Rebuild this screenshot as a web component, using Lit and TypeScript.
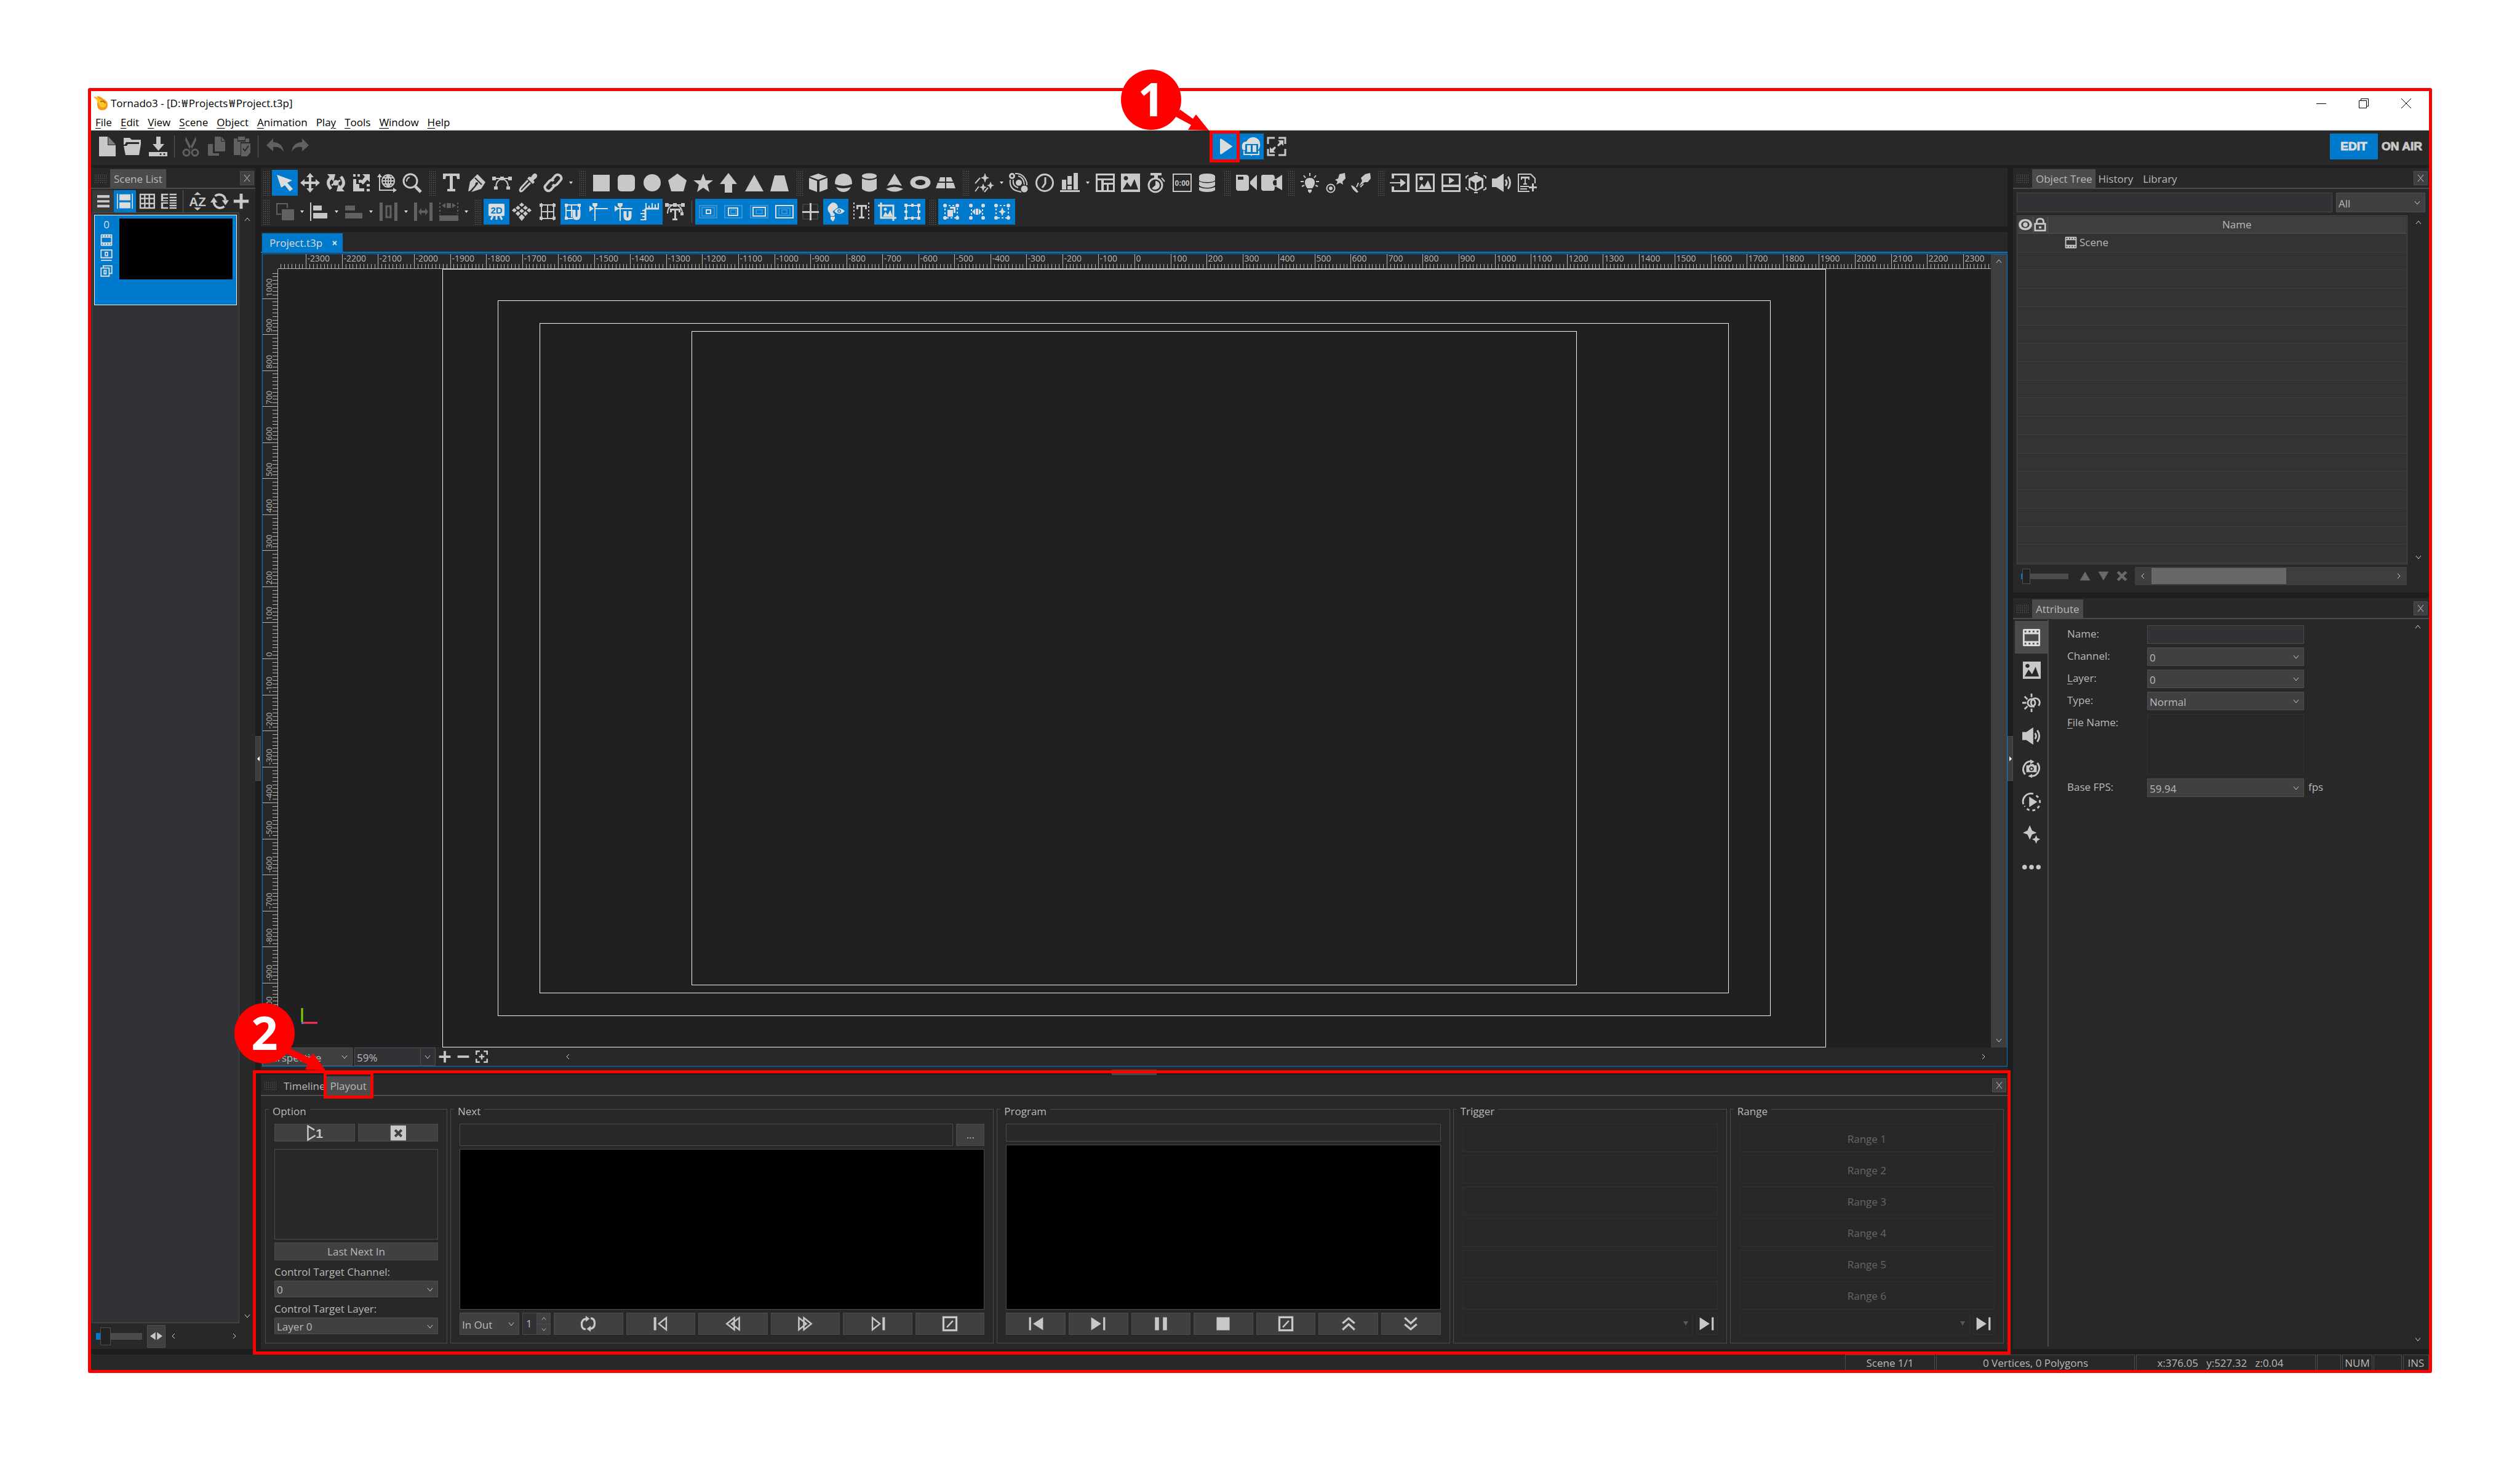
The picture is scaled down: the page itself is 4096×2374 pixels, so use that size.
import { LitElement, html, svg, css, TemplateResult, SVGTemplateResult } from 'lit';
import { customElement, state } from 'lit/decorators.js';
import { classMap } from 'lit/directives/class-map.js';

type Glyph = SVGTemplateResult;

/* Every glyph is drawn in a 32 x 32 box. "l" = stroked line, "h" = hole in the background colour. */
const glyphs: Record<string, Glyph> = {
  newFile: svg`<path d="M3 0h14v14h13v18H3z"/><path opacity=".55" d="M18 0l12 13H18z"/>`,
  openFile: svg`<path d="M2 2h10l3 3h15v7h-3V9H6L4 13H2z"/><path d="M9 12h21l-3 18H5L2 15h5z"/>`,
  saveFile: svg`<path d="M13 0h7v12h6L16.500 23 7 12h6z"/><path d="M1 25h30v7H1z"/><circle class="h" cx="20" cy="28.500" r="1.500"/><circle class="h" cx="26" cy="28.500" r="1.500"/>`,
  cut: svg`<path d="M8 0l10 20-3 2L7 6zM24 0L14 20l3 2 8-16z"/><circle class="l" cx="9" cy="26" r="5"/><circle class="l" cx="23" cy="26" r="5"/>`,
  copy: svg`<path d="M13 0h10v8h7v16H13z"/><path d="M24 0l6 7h-6z"/><path d="M2 12h8v15h10v4H2z"/>`,
  paste: svg`<path d="M3 3h6v5h13V3h6v6H14v21H3z"/><path d="M10 0h11v6H10z"/><path d="M15 11h15v15l-5 6H15z"/><path class="lh" stroke-width="2" d="M18 19l3 4 6-8"/>`,
  undo: svg`<path d="M2 14L13 3v6c9 0 16 5 17 16-4-7-9-9-17-8v7z"/>`,
  redo: svg`<path d="M30 14L19 3v6C10 9 3 14 2 25c4-7 9-9 17-8v7z"/>`,
  play: svg`<path d="M7 5q0-3 3-1l16 11q2 1 0 2L10 28q-3 2-3-1z"/>`,
  cloud: svg`<path d="M1 20q-2-12 7-12Q12 0 21 1q11 3 9 15l-2 5h-3v-8H8v9H3z"/><path class="lh" stroke-width="2" d="M7 13h19v14H7z"/><path d="M9 14h6v11H9zM18 14h6v11h-6z"/><path class="l" stroke-width="2" d="M4 23v6h24v-6"/><path d="M14 28h4l-2 4z"/>`,
  expand: svg`<path class="l" d="M2 12V2h11M19 2h11v10M30 20v10H19M13 30H2V20"/><path d="M18 6h9v9l-3-3-5 4-2-2 4-5zM14 26H5v-9l3 3 5-4 2 2-4 5z"/>`,
  select: svg`<path d="M3 3L28 12 20 16 29 26 24 30 16 20 10 24Z"/>`,
  move: svg`<path d="M16 0l6 7h-4v7h7v-4l7 6-7 6v-4h-7v7h4l-6 7-6-7h4v-7H7v4L0 16l7-6v4h7V7h-4z"/>`,
  rotate: svg`<path class="l" stroke-width="5" d="M8 8Q-1 15 8 26M24 24Q33 17 24 6"/><path d="M2 2h13l-3 12zM30 30H17l3-12z"/><circle cx="16" cy="16" r="4.500"/><path class="l" d="M9 20l14-8"/>`,
  scale: svg`<path d="M3 2h4v4H3zM10 2h4v4h-4zM3 10h5v8h5v7h8v5H3zM12 11h5v5h-5z"/><path d="M18 2h12v13l-4-4-7 8-4-4 7-9z"/><path d="M25 18h5v4h-5zM25 26h5v4h-5z"/>`,
  axes: svg`<path class="l" stroke-width="2" d="M4 5v23h23M18 3v20M9 13h18M10 8h16M10 18h16M18 3q-9 10 0 20M18 3q9 10 0 20"/><path d="M0 7l4-6 4 6zM26 24l6 4-6 4z"/><circle class="l" stroke-width="2" cx="18" cy="13" r="10"/>`,
  zoom: svg`<circle class="l" stroke-width="3" cx="13" cy="13" r="11"/><path class="l" stroke-width="5" d="M21 22l9 9"/><path class="l" stroke-width="2" d="M7 14q0-6 5-7"/>`,
  text: svg`<path d="M3 1h27v9h-4l-1-5h-6v21h4v4H10v-4h4V5H8l-1 5H3z"/>`,
  pen: svg`<path d="M18 2L31 15 24 26 8 31 12 26 17 20 19 17 15 16 14 20 6 29 3 30 6 14Z"/><path class="lh" stroke-width="2" d="M14 8l11 11"/><circle class="h" cx="17" cy="17" r="2"/>`,
  curve: svg`<path class="l" stroke-width="2" d="M3 9h26M6 24Q6 12 16 9Q26 12 26 24"/><path d="M0 6h6v6H0zM13 6h6v6h-6zM26 6h6v6h-6zM3 22h6v5H3zM23 22h6v5h-6z"/>`,
  dropper: svg`<path d="M21 7q5-9 9-5 4 4-5 10l2 3-3 3L15 9l3-3z"/><path class="l" stroke-width="3" d="M16 12L5 24q-3 4-1 6 3 0 5-3L20 16"/>`,
  link: svg`<g class="l" stroke-width="4"><path d="M13 12l7-8q4-3 8 1 3 4 0 7l-6 7q-4 3-7 0"/><path d="M19 20l-7 8q-4 3-8-1-3-4 0-7l6-7q4-3 7 0"/></g>`,
  square: svg`<path d="M3 3h27v27H3z"/>`,
  round: svg`<rect x="2" y="3" width="28" height="27" rx="6"/>`,
  circle: svg`<circle cx="16" cy="16" r="14"/>`,
  pentagon: svg`<path d="M16 1L31 12 26 30H6L1 12z"/>`,
  star: svg`<path d="M16 1l4 11h12l-9 7 3 12-10-7-10 7 3-12-9-7h12z"/>`,
  arrowUp: svg`<path d="M16 0l14 18h-8v14H10V18H2z"/>`,
  triangle: svg`<path d="M16 3l15 27H1z"/>`,
  trapezoid: svg`<path d="M8 4h16l7 26H1z"/>`,
  cube: svg`<path d="M16 1l14 5-14 5L2 6zM1 8l13 5v18L1 26zM31 8l-13 5v18l13-5z"/>`,
  sphere: svg`<path d="M2 18Q2 2 16 1Q30 2 30 18Q16 24 2 18zM4 23Q16 27 28 23Q24 31 16 31Q8 31 4 23z"/>`,
  cylinder: svg`<ellipse cx="16" cy="5" rx="12" ry="4.500"/><path d="M4 9q12 6 24 0v17q-12 9-24 0z"/>`,
  cone: svg`<path d="M16 1l12 20q-12-4-24 0z"/><path d="M2 26q14-7 28 0-14 9-28 0z"/>`,
  torus: svg`<path fill-rule="evenodd" d="M16 5c22 0 22 21 0 21S-6 5 16 5zm0 6c-11 0-11 9 0 9s11-9 0-9z"/>`,
  plane: svg`<path d="M7 7h8v7H5zM17 7h8l3 7H17zM3 16h12v9H0zM17 16h12l3 9H17z"/>`,
  particles: svg`<path d="M17 0l2 6 5 2-5 2-2 6-2-6-5-2 5-2zM14 17l2 5 4 1-4 2-2 5-2-5-4-2 4-1zM26 14l2 5 4 1-4 2-2 5-2-5-4-2 4-1z"/><path class="l" stroke-width="2" d="M1 17l8-9M1 30l6-8M16 31l6-7"/>`,
  orbit: svg`<circle class="l" stroke-width="3" cx="5" cy="5" r="3.500"/><path class="l" stroke-width="2" d="M10 1q14-1 19 15v4M2 11q-2 16 14 19l4 1M15 5q9 2 10 14M7 11q-2 10 8 13"/><circle cx="16" cy="16" r="5"/><circle cx="25" cy="26" r="5.500"/>`,
  clock: svg`<circle class="l" stroke-width="3" cx="16" cy="16" r="13.500"/><path class="l" stroke-width="3" d="M17 7v10l-5 7"/>`,
  chart: svg`<path d="M0 28h32v3H0zM3 11h7v16H3zM12 5h7v14h-7zM12 21h7v6h-7zM22 0h7v27h-7z"/>`,
  table: svg`<path fill-rule="evenodd" d="M1 1h31v30H1zM4 4v5h25V4zM4 12v16h6V12zM14 12v4h15v-4zM14 19v9h5v-9zM22 19v9h7v-9z"/>`,
  image: svg`<path fill-rule="evenodd" d="M1 1h31v30H1zM4 27h25L23 10 17 23 11 15zM9 5a3.500 3.500 0 1 0 .1 0z"/>`,
  stopwatch: svg`<path d="M7 0h18v4h-6v4h-6V4H7z"/><circle class="l" stroke-width="3" cx="15" cy="20" r="11"/><path class="l" stroke-width="2" d="M25 8l5 6"/><path d="M15 13v7l-6 5q3 3 6 2a7 7 0 0 0 0-14z"/>`,
  counter: svg`<path class="l" stroke-width="2" d="M2 2h29v28H2z"/><text x="16.500" y="21" text-anchor="middle" class="digits">0:00</text>`,
  database: svg`<path d="M3 5q2-4 13-4t13 4v7q-2 3-13 3T3 12zM3 14q13 5 26 0v6q-4 4-13 4T3 20zM3 23q13 5 26 0v5q-4 3-13 3T3 28z"/>`,
  camera: svg`<path fill-rule="evenodd" d="M0 3h17q4 1 4 5v18q-1 3-4 3H3q-3-1-3-4zM3 6v5h9V6z"/><path d="M23 14L34 3v25L23 18z"/>`,
  camera2: svg`<path d="M0 6q0-3 3-3h16q3 1 3 6-6 7 0 14 0 6-3 6H3q-3-1-3-4z"/><path d="M25 9l9-6v25l-9-5z"/><circle class="l" stroke-width="2" cx="23" cy="16" r="5.500"/>`,
  bulb: svg`<path d="M16 8q8 0 8 8 0 4-4 9h-8q-4-5-4-9 0-8 8-8zM13 27h6v3l-3 3-3-3z"/><path class="l" stroke-width="2" d="M16 0v5M6 4l3 4M26 4l-3 4M1 14h5M26 14h5M3 22l4-2M29 22l-4-2"/>`,
  spot: svg`<path d="M22 2l9-2 1 9-5 5 1 5-5-3-6 3 2-5-4-3 5-2z"/><circle class="l" stroke-width="2" cx="8" cy="25" r="6.500"/><circle cx="8" cy="25" r="3"/>`,
  spot2: svg`<path d="M23 2l8-2 1 9-5 6h-5l-9 6 5-8-2-5z"/><path class="l" stroke-width="2" d="M12 16l-3 7M20 18l-5 5"/><path d="M0 20q5 0 12 11l-3 1Q1 26 0 20z"/>`,
  importIn: svg`<path d="M3 1h29v30H3v-9h4v6h21V4H7v5H3z"/><path d="M0 15h17V9l9 7-9 7v-6H0z"/>`,
  imageFrame: svg`<path fill-rule="evenodd" d="M1 1h31v30H1zM4 4v24h25V4z"/><path d="M6 26l5-9 4 6 6-11 6 14z"/><circle cx="10" cy="9" r="3"/>`,
  playFrame: svg`<path fill-rule="evenodd" d="M1 1h31v30H1zM4 4v15h25V4zM4 23v5h25v-5z"/><path d="M13 6l9 6-9 6z"/>`,
  cubeScan: svg`<path fill-rule="evenodd" d="M16 3l12 6v15l-12 6-12-6V9zM7 12v10l7 5V16zM25 12l-8 4v11l8-5z"/><path class="l" stroke-width="2" d="M0 9V6l4-2M32 9V6l-4-2M0 23v3l4 2M32 23v3l-4 2M13 0h6M13 32h6"/>`,
  speaker: svg`<path d="M0 9h7L19 1v30L7 23H0z"/><path class="l" stroke-width="3" d="M22 11q4 5 0 10M26 6q7 10 0 20"/>`,
  textDoc: svg`<path class="l" stroke-width="2" d="M20 30H2V2h20l7 7v8"/><path d="M6 6h14v5h-2V9h-4v8h2v2h-6v-2h2V9H8v2H6zM5 21h14v2H5zM5 25h11v2H5zM24 17h3v5h5v3h-5v5h-3v-5h-5v-3h5z"/>`,
  bringFront: svg`<path class="l" stroke-width="2" d="M10 20H3V3h17v7"/><path d="M11 12h20v18H11z"/>`,
  alignLeft: svg`<path d="M1 1h2v30H1zM6 6h14v8H6zM6 18h23v9H6z"/>`,
  alignLeft2: svg`<path d="M2 6h16v8H2zM2 18h28v9H2z"/>`,
  distribute: svg`<path d="M1 1h5v30H1zM25 1h5v30h-5z"/><path class="l" stroke-width="3" d="M12 7h7v18h-7z"/>`,
  spacing: svg`<path d="M1 1h5v30H1zM26 1h5v30h-5z"/><path d="M8 16l5-6v4h6v-4l5 6-5 6v-4h-6v4z"/>`,
  sameSize: svg`<path d="M1 22h31v9H1zM5 6l6-4v8zM28 6l-6-4v8zM13 2h7v8h-7z"/><path class="l" stroke-width="2" stroke-dasharray="3 3" d="M2 1v19M31 1v19"/>`,
  twoD: svg`<rect x="3" y="3" width="26" height="20" rx="2"/><path class="l" d="M10 23l-3 6M16 23v6M22 23l3 6"/><text x="16" y="19" text-anchor="middle" class="two">2D</text>`,
  rhombGrid: svg`<path d="M16 1l4 4-4 3-4-3zM10 6l4 4-4 3-4-3zM22 6l4 4-4 3-4-3zM16 11l4 4-4 3-4-3zM4 10l4 4-4 3-4-3zM28 10l4 4-4 3-4-3zM10 15l4 4-4 4-4-4zM22 15l4 4-4 4-4-4zM16 20l5 5-5 6-5-6z"/>`,
  gridBox: svg`<path class="l" stroke-width="2" d="M6 2v28M26 2v28M4 5h24M4 27h24M16 5v22M5 16h22"/><path d="M3 3h5v5H3zM24 3h5v5h-5zM3 24h5v5H3zM24 24h5v5h-5z"/>`,
  gridMagnet: svg`<path class="l" stroke-width="2" d="M5 4v24M3 5h26M4 14h12M4 27h12M14 5v20M27 5v8"/><path d="M3 3h5v5H3zM24 3h5v5h-5zM3 24h5v5H3z"/><path class="l" stroke-width="5" d="M18 13v9q0 5 4 5t4-5v-9"/>`,
  guide: svg`<path class="l" stroke-width="2" d="M9 11h22M10 5v26"/><path d="M6 2h8v4l-4 4-4-4zM1 6l7 5-7 5z"/>`,
  guideMagnet: svg`<path class="l" stroke-width="2" d="M4 11h26M10 5v26"/><path d="M6 2h8v4l-4 4-4-4zM1 6l7 5-7 5z"/><path class="l" stroke-width="5" d="M18 15v8q0 5 4 5t4-5v-8"/>`,
  rulers: svg`<path class="l" stroke-width="3" d="M9 11h22M9 11v19"/><path class="l" stroke-width="2" d="M10 11V2M15 11V6M20 11V2M25 11V4M30 11V2M9 29H1M9 24H4M9 19H1M9 14H4"/>`,
  textCurve: svg`<path class="l" stroke-width="2" d="M3 5h26M4 19Q4 7 14 5M28 19Q28 9 20 6"/><path d="M0 2h6v6H0zM13 2h6v6h-6zM26 2h6v6h-6zM8 11h17v6h-3v-3h-4v13h2v3h-8v-3h3V14h-4v3H8zM25 17h5v5h-5z"/>`,
  safe1: svg`<g class="l" stroke-width="2"><path opacity=".25" d="M2 6h28v20H2zM6 9h20v14H6z"/><path d="M13 13h7v6h-7z"/></g>`,
  safe2: svg`<g class="l" stroke-width="2"><path opacity=".25" d="M2 6h28v20H2zM12 13h8v6h-8z"/><path d="M8 10h15v12H8z"/></g>`,
  safe3: svg`<g class="l" stroke-width="2"><path opacity=".25" d="M2 6h28v20H2zM11 13h10v6H11z"/><path d="M6 9h20v14H6z"/></g>`,
  safe4: svg`<g class="l" stroke-width="2"><path opacity=".25" d="M7 10h18v12H7zM12 13h8v6h-8z"/><path d="M2 6h28v20H2z"/></g>`,
  crosshair: svg`<path class="l" opacity=".3" stroke-width="1" d="M4 4h24v24H4z"/><path d="M15 2h3v13h12v3H18v12h-3V18H3v-3h12z"/>`,
  bulbEye: svg`<path d="M10 1q8 0 9 8l-8 6q-1 2 3 5l-1 3H7q0-4-4-8-3-8 7-14zM7 24h7v3l-3 5-4-4z"/><path fill-rule="evenodd" d="M13 15q8-9 17 0-9 9-17 0zM21 12a3 3 0 1 0 .1 0z"/><circle cx="21" cy="15" r="1.500"/>`,
  textBounds: svg`<path class="l" stroke-width="2" stroke-dasharray="3 3" d="M4 1v30M28 1v30"/><path d="M8 5h17v7h-3V8h-4v16h3v3h-9v-3h3V8h-4v4H8z"/>`,
  cropTool: svg`<path class="l" stroke-width="3" d="M1 6h25v25M6 1v25h25"/><path d="M9 24l4-8 4 5 4-8 4 11z"/><circle cx="13" cy="12" r="2.500"/>`,
  transform: svg`<path class="l" stroke-width="2" d="M6 6h20v20H6z"/><path d="M3 3h5v5H3zM24 3h5v5h-5zM3 24h5v5H3zM24 24h5v5h-5zM14 3h4v5h-4zM14 24h4v5h-4zM3 14h5v4H3zM24 14h5v4h-5z"/>`,
  marqueeCopy: svg`<path class="l" stroke-width="2" stroke-dasharray="3 3" d="M6 6h20v20H6z"/><path d="M10 13h9v11h-9zM14 8h9v10h-3v-7h-6z"/><circle cx="6" cy="6" r="3"/><circle cx="26" cy="6" r="3"/><circle cx="6" cy="26" r="3"/><circle cx="26" cy="26" r="3"/>`,
  marqueeMove: svg`<path class="l" stroke-width="2" stroke-dasharray="3 3" d="M7 6v20M25 6v20"/><path d="M8 16l5-5v10zM24 16l-5-5v10zM14 11h4v10h-4z"/><circle cx="6" cy="6" r="3"/><circle cx="26" cy="6" r="3"/><circle cx="6" cy="26" r="3"/><circle cx="26" cy="26" r="3"/>`,
  marqueeStar: svg`<path class="l" stroke-width="2" stroke-dasharray="3 3" d="M6 6h20v20H6z"/><path d="M16 9l2 5 4 2-4 2-2 5-2-5-4-2 4-2z"/><circle cx="6" cy="6" r="3"/><circle cx="26" cy="6" r="3"/><circle cx="6" cy="26" r="3"/><circle cx="26" cy="26" r="3"/>`,
  film: svg`<path fill-rule="evenodd" d="M3 1h26q2 0 2 2v26q0 2-2 2H3q-2 0-2-2V3q0-2 2-2zM4 10v12h24V10zM4 4v3h3V4zM11 4v3h3V4zM18 4v3h3V4zM25 4v3h3V4zM4 25v3h3v-3zM11 25v3h3v-3zM18 25v3h3v-3zM25 25v3h3v-3z"/>`,
  slot: svg`<path class="l" stroke-width="3" d="M2 2h28v20H2z"/><path class="l" d="M2 29h28M13 8h6v9h-6z"/>`,
  layers: svg`<path class="l" stroke-width="3" d="M2 9h21v21H2zM8 9V3h22v20h-7M10 15h5v9h-5z"/>`,
  listView: svg`<path d="M0 0h32v7H0zM0 13h32v6H0zM0 25h32v7H0z"/>`,
  cardView: svg`<path d="M0 1h2v30H0zM30 1h2v30h-2zM5 2h22v12H5zM5 18h22v12H5z"/>`,
  gridView: svg`<path fill-rule="evenodd" d="M1 1h31v30H1zM4 4v5h6V4zM13 4v5h6V4zM22 4v5h7V4zM4 12v7h6v-7zM13 12v7h6v-7zM22 12v7h7v-7zM4 22v6h6v-6zM13 22v6h6v-6zM22 22v6h7v-6z"/>`,
  detailView: svg`<path d="M1 1h14v3H5v4h10v3H5v3h10v2H1zM18 1h14v3H18zM18 7h14v3H18zM18 13h14v3H18zM1 18h14v3H5v7h10v3H1zM18 18h14v3H18zM18 23h14v3H18zM18 28h14v3H18z"/>`,
  sortAz: svg`<path d="M16 0l6 5H10zM16 32l6-5H10z"/><text x="16" y="24" text-anchor="middle" class="az">AZ</text>`,
  refresh: svg`<path class="l" stroke-width="4" d="M8 7a11 11 0 0 1 18 7M24 25a11 11 0 0 1-18-7"/><path d="M20 14h12l-6 9zM0 18h12l-6-9z"/>`,
  plus: svg`<path d="M13 1h6v12h12v6H19v12h-6V19H1v-6h12z"/>`,
  minus: svg`<path d="M1 13h30v6H1z"/>`,
  fit: svg`<path class="l" stroke-width="4" d="M2 11V2h9M21 2h9v9M30 21v9h-9M11 30H2v-9"/><path d="M14 9h4v5h5v4h-5v5h-4v-5H9v-4h5z"/>`,
  eye: svg`<path fill-rule="evenodd" d="M16 3c21 0 21 26 0 26S-5 3 16 3zm0 5c-13 0-13 16 0 16s13-16 0-16z"/><circle cx="16" cy="16" r="5.500"/>`,
  lock: svg`<path fill-rule="evenodd" d="M2 12h28v20H2zM6 16v12h20V16z"/><path class="l" stroke-width="4" d="M8 13V9q0-7 8-7t8 7v4"/><path d="M13 20h6v5h-6z"/>`,
  light: svg`<path class="l" stroke-width="3" d="M16 0v6M16 26v6M0 16h7M4 5l5 5M4 27l5-5"/><circle class="l" stroke-width="3" cx="16" cy="16" r="6.500"/><path class="l" stroke-width="3" d="M28 21a7.500 7.500 0 1 0-7 2"/>`,
  cameraLoop: svg`<path class="l" stroke-width="3" d="M5 26A14 14 0 0 1 16 3M26 6a14 14 0 0 1-9 23"/><path d="M14 0l7 4-7 4zM17 32l-7-3 7-4z"/><path fill-rule="evenodd" d="M7 10h5l2-2h5l2 2h4v12H7zM16 12a4 4 0 1 0 .1 0z"/><circle cx="16" cy="16" r="2"/>`,
  playDash: svg`<path class="l" stroke-width="3" d="M2 20A14 14 0 0 1 19 2"/><path class="l" stroke-width="3" stroke-dasharray="5 5" d="M24 5A14 14 0 1 1 4 23"/><path d="M12 7l14 9-14 9z"/>`,
  sparkle: svg`<path d="M13 0l4 9 8 4-8 3-4 9-4-9-8-3 8-4zM24 17l2 5 5 2-5 3-2 5-2-5-5-3 5-2z"/>`,
  dots: svg`<circle cx="4" cy="16" r="4"/><circle cx="16" cy="16" r="4"/><circle cx="28" cy="16" r="4"/>`,
  up: svg`<path d="M16 3l15 26H1z"/>`,
  down: svg`<path d="M16 29L1 3h30z"/>`,
  cross: svg`<path class="l" stroke-width="8" d="M4 4l24 24M28 4L4 28"/>`,
  loopOne: svg`<path class="l" stroke-width="3" d="M16 10L3 2v28l15-9"/><text x="26" y="26" text-anchor="middle" class="one">1</text>`,
  boxCross: svg`<path fill-rule="evenodd" d="M1 1h31v30H1z"/><path class="lh" stroke-width="5" d="M10 10l13 13M23 10L10 23"/>`,
  loop: svg`<path class="l" stroke-width="4" d="M11 27Q3 27 3 17T12 6M21 5q8 0 8 10t-9 11"/><path d="M11 0l8 6-8 6zM21 32l-8-6 8-6z"/>`,
  toStart: svg`<path d="M2 3h5v26H2z"/><path class="l" d="M27 4v24L12 16z"/>`,
  rewind: svg`<path class="l" d="M19 4v24L4 16zM29 4v24L14 16z"/>`,
  forward: svg`<path class="l" d="M13 4v24l15-12zM3 4v24l15-12z"/>`,
  toEnd: svg`<path d="M25 3h5v26h-5z"/><path class="l" d="M5 4v24l15-12z"/>`,
  slashBox: svg`<path class="l" stroke-width="4" d="M3 3h26v26H3z"/><path class="l" stroke-width="3" d="M10 23L22 10"/>`,
  prevSolid: svg`<path d="M2 3h4v26H2zM30 3v26L10 16z"/>`,
  nextSolid: svg`<path d="M26 3h4v26h-4zM2 3v26l20-13z"/>`,
  pause: svg`<path d="M4 3h8v26H4zM20 3h8v26h-8z"/>`,
  stop: svg`<path d="M3 3h26v26H3z"/>`,
  chevUp: svg`<path class="l" stroke-width="4" d="M4 15L16 5l12 10M4 28l12-11 12 11"/>`,
  chevDown: svg`<path class="l" stroke-width="4" d="M4 4l12 11L28 4M4 17l12 10 12-10"/>`,
  leftRight: svg`<path d="M0 16L14 6v20zM32 16L18 6v20z"/>`,
};

const icon = (name: string, size = 's32') =>
  html`<svg class="ico ${size}" viewBox="0 0 32 32" stroke-width="3" aria-hidden="true">${glyphs[name]}</svg>`;

const chevrons: Record<string, string> = {
  up: 'M1 7l4-5 4 5', down: 'M1 3l4 5 4-5', left: 'M7 1L3 5l4 4', right: 'M3 1l4 4-4 4',
};
const chevron = (dir: string) =>
  html`<svg class="chev" viewBox="0 0 10 10" aria-hidden="true"><path d=${chevrons[dir]} /></svg>`;

/* Toolbar notation: "name" button, "name!" switched on, "name-" disabled, "v" drop-down arrow, "|" divider. */
const rowOne = [
  'select! move rotate scale axes zoom',
  'text pen curve dropper link v',
  'square round circle pentagon star arrowUp triangle trapezoid',
  'cube sphere cylinder cone torus plane',
  'particles v orbit clock chart v table image stopwatch counter database',
  'camera camera2',
  'bulb spot spot2',
  'importIn imageFrame playFrame cubeScan speaker textDoc',
];
const rowTwo = [
  'bringFront- v alignLeft v alignLeft2- v distribute- v spacing- sameSize- v',
  'twoD! rhombGrid gridBox gridMagnet! guide! guideMagnet! rulers! textCurve | safe1! safe2! safe3! safe4! crosshair bulbEye! textBounds cropTool! transform!',
  'marqueeCopy! marqueeMove! marqueeStar!',
];
const BUTTON = 41.55;
const NARROW: Record<string, number> = { v: 14.8, '|': 11.9 };

const PX_PER_UNIT = 0.5855;
const frames = [[1124, 632], [1034, 581], [966, 544], [719, 531]];

const range = (from: number, to: number, step: number) =>
  Array.from({ length: Math.floor((to - from) / step) + 1 }, (_, i) => from + i * step);

@customElement('app-root')
export class AppRoot extends LitElement {
  @state() private mode = 'EDIT';

  static styles = css`
    :host {
      display: block;
      font-family: 'Open Sans', 'Noto Sans', 'Noto Sans CJK KR', sans-serif;
      font-size: 17px;
      line-height: 20px;
      color: #b9b9b9;
      --bg: #282828;
      --line: #4b4b4b;
      --blue: #007acc;
      --ctl: #404042;
    }
    * { box-sizing: border-box; }
    button, input, select, textarea {
      font: inherit; color: inherit; margin: 0; padding: 0; border: 0; border-radius: 0;
      background: none; appearance: none; outline: none; min-width: 0; display: block;
    }
    .page { height: 100vh; min-height: 1400px; padding: 143px; background: #fff; }
    .window {
      height: 100%; border: 5px solid #f00; border-radius: 3px; background: #1e1e1e;
      display: flex; flex-direction: column;
    }

    .ico { display: block; flex: none; fill: currentColor; overflow: visible; }
    .s32 { width: 32px; height: 32px; }
    .s30 { width: 30px; height: 30px; }
    .s26 { width: 26px; height: 26px; }
    .s20 { width: 20px; height: 20px; }
    .l { fill: none; stroke: currentColor; }
    .h { fill: var(--bg); }
    .lh { fill: none; stroke: var(--bg); }
    .digits { font: bold 12px 'Liberation Sans', sans-serif; }
    .two { font: bold 15px 'Liberation Sans', sans-serif; fill: var(--bg); }
    .az { font: bold 22px 'Liberation Sans', sans-serif; }
    .one { font: bold 26px 'Liberation Sans', sans-serif; }
    .chev { width: 10px; height: 10px; display: block; fill: none; stroke: #d0d0d0; stroke-width: 1; flex: none; }

    .title { height: 39px; background: #fff; display: flex; align-items: center; padding: 0 3px 0 4px; color: #000; }
    .logo { width: 24px; height: 24px; margin-right: 4px; overflow: visible; }
    .title h1 { font: inherit; margin: 0; flex: 1; }
    .won { font-family: 'Noto Sans CJK KR', sans-serif; padding: 0 2px; }
    .winbtn { width: 69px; height: 34px; display: grid; place-items: center; }
    .winbtn svg { width: 16px; height: 16px; fill: none; stroke: #000; stroke-width: 1; }
    .menu { height: 25px; background: #fff; border-bottom: 2px solid #ececec; display: flex; gap: 14px; padding-left: 7px;
      line-height: 23px; color: #000; }
    .menu u { text-underline-offset: 3px; }

    .bar { height: 56px; background: var(--bg); display: grid; grid-template-columns: 1818fr auto 1847fr;
      padding: 5px 5px 0; margin-bottom: 5px; color: #c8c8c8; }
    .tools { display: flex; height: 42px; }
    .btn { display: grid; place-items: center; flex: 42 1 0; height: 42px; color: #c8c8c8; }
    .btn.on { background: var(--blue); color: #dcdcdc; --bg: #007acc; }
    .btn.off { color: #616161; }
    .dd { flex: 15 1 0; display: grid; place-items: center; height: 42px; }
    .dd svg { width: 6px; height: 4px; fill: #dcdcdc; }
    .sep { flex: 12 1 0; display: grid; place-items: center; height: 42px; }
    .sep::before { content: ''; width: 1px; height: 36px; background: #5a5a5a; }
    .view { position: relative; }
    .spot { position: absolute; border: 5px solid #f00; pointer-events: none; z-index: 3; }
    .spot.play { left: -5px; top: -5px; width: 49px; height: 52px; }
    .callout { position: absolute; z-index: 4; overflow: visible; fill: #f00; pointer-events: none; }
    .callout text { fill: #fff; font: bold 76px 'Open Sans', 'Noto Sans', sans-serif; text-anchor: middle; }
    .callout.one-at { left: -149px; top: -104px; width: 144px; height: 100px; }
    .modes { display: flex; justify-content: flex-end; }
    .mode { width: 78px; height: 42px; font: bold 19px/42px 'Liberation Sans', sans-serif; color: #c8c8c8; text-align: center;
      white-space: nowrap; -webkit-text-stroke: 1px currentColor; }
    .mode.on { background: var(--blue); color: #dcdcdc; }

    .main { flex: 1; min-height: 0; display: grid; grid-template-columns: 267px 9px minmax(0, 1fr) 9px 676px; }
    .panel { background: var(--bg); display: flex; flex-direction: column; min-height: 0; min-width: 0; }
    .handle { align-self: center; width: 9px; height: 73px; background: #3e3e3e; border: 1px solid #4b4b4b; display: grid; place-items: center; }
    .handle svg { width: 4px; height: 8px; fill: #fff; }
    .head { height: 34px; flex: none; border-bottom: 2px solid var(--line); display: flex; align-items: flex-end; padding: 0 2px 0 6px; }
    .dots, .grip { flex: none; background:
      linear-gradient(var(--bg) 2px, transparent 2px) 0 0 / 3px 3px content-box,
      linear-gradient(90deg, #6e6e6e 1px, transparent 1px) 0 0 / 3px 3px content-box; }
    .dots { width: 20px; height: 17px; margin: 0 5px 6px 0; }
    .tab { height: 30px; padding: 0 12px 0 4px; line-height: 32px; white-space: nowrap; }
    .tab.on { background: var(--line); padding: 0 6px; }
    .close { width: 23px; height: 23px; background: var(--ctl); border: 1px solid #4e4e50; margin: 0 0 4px auto; display: grid; place-items: center; }
    .close svg { width: 11px; height: 11px; fill: none; stroke: #c8c8c8; stroke-width: 1; }

    .sc-tools { display: flex; height: 38px; padding: 2px 5px 0 2px; }
    .sc-tools .btn { height: 36px; flex: 36 1 0; }
    .sc-tools .btn.lit { background: #3a3a3a; }
    .sc-tools .sep { height: 36px; }
    .sc-body { flex: 1; display: grid; grid-template-columns: 240px 1fr; padding-left: 1px; min-height: 0; }
    .sc-list { border: 1px solid var(--line); background: #323236; padding: 3px 3px; margin: 0; list-style: none; }
    .card { width: 100%; height: 147px; border: 1px solid #f0f0f0; background: var(--blue); color: #dcdcdc; display: grid;
      grid-template-columns: 40px 184px; align-items: start; padding-top: 5px; text-align: center; --bg: #007acc; }
    .card .meta { display: flex; flex-direction: column; align-items: center; gap: 5px; padding-right: 2px; }
    .shot { height: 99px; background: #000; }
    .vbar { display: flex; flex-direction: column; justify-content: space-between; align-items: center; padding: 7px 0; }
    .sc-foot { height: 42px; flex: none; display: flex; align-items: center; padding: 0 29px 0 8px; }
    .sc-foot .lr { width: 30px; height: 37px; background: var(--ctl); border: 1px solid #4e4e50; margin: 0 8px; display: grid; place-items: center; color: #c8c8c8; }
    .sc-foot .track { flex: 1; display: flex; justify-content: space-between; }

    input[type='range'] { height: 29px; flex: none; }
    input[type='range']::-webkit-slider-runnable-track { height: 11px; background: linear-gradient(90deg, #007acc 7px, #4b4b4b 7px); }
    input[type='range']::-webkit-slider-thumb { appearance: none; height: 29px; margin-top: -9px; background: #222; border: 1px solid #505050; width: 17px; }
    .rng-a { width: 75px; }
    .rng-b { width: 77px; }
    .rng-b::-webkit-slider-thumb { width: 13px !important; height: 25px !important; margin-top: -8px !important; }
    .rng-b::-webkit-slider-runnable-track { height: 9px !important; }

    .center { display: flex; flex-direction: column; gap: 9px; min-width: 0; min-height: 0; position: relative; }
    .toolbox { height: 95px; flex: none; gap: 5px; padding: 3px 0 3px 4px; }
    .toolrow { display: flex; height: 42px; }
    .grip { width: 14px; height: 42px; padding-right: 4px; }
    .toolrow .grip:not(:first-child) { margin-left: 7px; }
    .group { display: flex; flex: none; }

    .stage { flex: 1; padding: 0 0 5px 2px; }
    .docs { height: 32px; flex: none; padding-top: 2px; display: flex; }
    .doc { background: var(--blue); color: #dcdcdc; display: flex; align-items: center; gap: 16px; padding: 2px 9px 0 12px; height: 30px; }
    .doc .ico { width: 8px; height: 8px; }
    .rule { height: 2px; background: var(--blue); margin: 0 0 1px -2px; flex: none; }
    .box { flex: 1; min-height: 0; border: 1px solid var(--blue); display: grid;
      grid-template: 24px minmax(0, 1fr) 30px / 25px minmax(0, 1fr) 26px; }
    .r-top { grid-area: 1 / 2; width: 100%; height: 100%; overflow: visible; border-bottom: 1px solid #b8b8b8; z-index: 1; }
    .r-left { grid-area: 2 / 1; width: 100%; height: 100%; overflow: visible; border-right: 1px solid #b8b8b8; }
    .r-top path, .r-left path { stroke: #b8b8b8; stroke-width: 1; shape-rendering: crispEdges; }
    .r-top text { font-size: 14px; fill: #b8b8b8; }
    .r-left text { font-size: 13px; fill: #b8b8b8; }
    .world { grid-area: 2 / 2; width: 100%; height: 100%; background: #202020; overflow: hidden; }
    .world .frame { fill: none; stroke: #f0f0f0; stroke-width: 1; }
    .v-scroll { grid-area: 1 / 3 / 3 / 4; background: #3e3e3e; }
    .nav { grid-area: 3 / 1 / 4 / 4; display: flex; align-items: center; padding-right: 33px; }
    .nav .sel-a { width: 146px; margin-right: 3px; }
    .nav .sel-b { width: 132px; }
    .nav .sel-b select { background: #323236; }
    .navbtn { width: 30px; display: grid; place-items: center; color: #c8c8c8; }
    .navbtn .ico { width: 20px; height: 20px; }
    .nav .track { flex: 1; display: flex; justify-content: space-between; padding-left: 120px; }

    .sel { position: relative; display: block; height: 30px; }
    .sel select { width: 100%; height: 100%; background: var(--ctl); border: 1px solid #4e4e50; padding: 3px 22px 0 3px; }
    .sel .chev, .sel .tri { position: absolute; right: 8px; top: 50%; margin-top: -5px; pointer-events: none; }
    .sel.cut::after { content: ''; position: absolute; right: 24px; top: 0; bottom: 0; width: 1px; background: #4e4e50; }
    .field { background: #323236; border: 1px solid #4b4b4d; height: 30px; padding: 0 4px; width: 100%; }

    .playout { height: 445px; flex: none; position: relative; }
    .pull { position: absolute; left: 50%; top: -9px; width: 73px; height: 9px; background: #484848; margin-left: -37px; }
    .ring { position: absolute; left: -13px; top: -8px; right: -5px; bottom: -9px; border: 5px solid #f00; pointer-events: none; z-index: 2; }
    .tabwrap { position: relative; }
    .tabwrap .spot { left: -5px; top: -8px; right: -5px; bottom: -6px; }
    .playout .tab { padding: 0 2px 0 6px; }
    .playout .tab.on { padding: 0 6px; }
    .callout.two-at { left: -150px; top: -119px; width: 148px; height: 109px; }
    .groups { flex: 1; min-height: 0; display: grid; grid-template-columns: 296px 883fr 736fr 445fr 445fr; gap: 5px; padding: 7px 6px 10px 7px; }
    fieldset { margin: 0; min-width: 0; border: 1px solid var(--line); padding: 0 14px 13px; display: flex; flex-direction: column; height: 395px; }
    legend { padding: 8px 6px 0; margin-left: -9px; height: 28px; }
    .in { flex: 1; min-height: 0; display: flex; flex-direction: column; gap: 5px; padding-top: 10px; }
    .pair { display: flex; gap: 5px; flex: none; }
    .pad { flex: 1 1 0; height: 36px; background: var(--ctl); border: 1px solid #4b4b4b; display: grid; place-items: center; color: #c8c8c8; --bg: #404042; }
    .pad.low { height: 29px; }
    .pad.word { flex: none; height: 29px; color: #b9b9b9; }
    .box-empty { height: 147px; border: 1px solid var(--line); margin: 7px 0 0; flex: none; }
    .ctl-label { height: 28px; line-height: 28px; margin: 0; }
    .ctl-b { margin-top: 5px; }
    .stack { display: flex; flex-direction: column; }
    .stack .sel { height: 27px; }
    .line { height: 36px; border: 1px solid var(--line); flex: 1; padding: 0 4px; }
    .line.low { height: 29px; flex: none; }
    .more { width: 46px; height: 36px; background: var(--ctl); border: 1px solid #4b4b4b; }
    .screen { flex: 1; min-height: 0; background: #000; border: 1px solid var(--line); }
    .mode-sel { width: 97px; height: 36px; }
    .spin { width: 46px; height: 36px; display: grid; grid-template-columns: 22px 1fr; border: 1px solid #4b4b4b; background: var(--ctl); }
    .spin input { width: 100%; background: #323236; padding: 0 5px; }
    .spin div { display: grid; grid-template-rows: 1fr 1fr; border-left: 1px solid #4b4b4b; }
    .spin button { display: grid; place-items: center; }
    .spin button + button { border-top: 1px solid #4b4b4b; }
    .spin .chev { width: 8px; height: 8px; }
    .slot { flex: 1 1 0; border: 1px solid #303030; color: #666; min-height: 0; padding-top: 3px; }
    .sel.dim { flex: 1; height: 36px; }
    .sel.dim select { background: none; border-color: #303030; }
    .tri { width: 8px; height: 8px; fill: #5a5a5a; }
    .pad.dim { flex: none; width: 35px; background: none; border-color: #303030; }

    .right { display: flex; flex-direction: column; gap: 9px; min-height: 0; }
    .tree { height: 690px; flex: none; }
    .find { display: flex; gap: 6px; padding: 6px 6px 5px; }
    .find .field { flex: 1; height: 32px; }
    .find .sel { width: 145px; height: 32px; }
    .tree-body { flex: 1; min-height: 0; display: grid; grid-template-columns: 635px 1fr; padding-left: 6px; }
    .grid-wrap { border: 1px solid var(--line); padding: 1px; min-height: 0; background: #333; height: 567px; }
    table { width: 100%; height: 100%; border-collapse: collapse; table-layout: fixed; }
    th { font-weight: 400; background: #3e3e3e; height: 27px; padding: 0; border-bottom: 2px solid #484848; }
    th + th { border-left: 1px solid #5a5a5a; }
    th .ico { margin: 0 auto; width: 22px; height: 22px; color: #c8c8c8; }
    th.icon-col { width: 24px; }
    th.name { padding-left: 32px; }
    td { padding: 0; height: 29px; border-bottom: 1px solid #3e3e3e; }
    .node { display: flex; align-items: center; gap: 4px; padding-left: 28px; height: 28px; color: #b9b9b9; }
    .node .ico { color: #c8c8c8; }
    .tree-foot { height: 46px; flex: none; display: flex; align-items: center; padding: 0 36px 8px 13px; }
    .tree-foot .mini { width: 30px; display: grid; place-items: center; color: #6a6a6a; }
    .tree-foot .mini .ico { width: 20px; height: 18px; }
    .tree-foot .rng-b { margin-right: 12px; }
    .h-scroll { flex: 1; height: 30px; margin-left: 6px; background: #3e3e3e; display: flex; align-items: center; padding: 2px 8px; gap: 9px; }
    .h-scroll .thumb { width: 219px; height: 26px; background: #686868; margin-right: auto; }
    .attr { flex: 1; }
    .attr-body { flex: 1; min-height: 0; display: grid; grid-template-columns: 55px 1fr 36px; padding: 1px 0 4px 3px; }
    .side { border-right: 2px solid var(--line); padding-top: 2px; }
    .side div { height: 427px; display: flex; flex-direction: column; }
    .side button { flex: 1 1 0; display: grid; place-items: center; color: #c8c8c8; }
    .side button.on { background: var(--line); color: #dcdcdc; --bg: #4b4b4b; }
    .form { display: grid; grid-template-columns: 130px 255px 1fr; grid-auto-rows: min-content; gap: 6px 0; padding: 9px 0 0 30px; align-content: start; }
    .form label { line-height: 28px; grid-column: 1; }
    .form .unit { padding-left: 7px; line-height: 28px; }
    .form textarea { height: 99px; width: 100%; border: 1px solid #303030; resize: none; }
    .form u { text-underline-offset: 3px; }

    .status { height: 25px; flex: none; margin-top: 9px; background: var(--bg); display: flex; justify-content: flex-end; gap: 2px; }
    .cell { border: 1px solid var(--line); border-bottom: 0; text-align: center; line-height: 26px; white-space: pre; width: 46px; }
    .cell.scene { width: 146px; }
    .cell.poly { width: 323px; }
    .cell.pos { width: 292px; padding-right: 18px; }
    .cell.lock-key { width: 39px; }
    .cell.key { width: 49px; }
    .cell.ins { width: 42px; }
  `;

  private tool(token: string) {
    if (token === 'v') return html`<button class="dd" aria-label="More"><svg viewBox="0 0 6 4"><path d="M0 0h6L3 4z"/></svg></button>`;
    if (token === '|') return html`<span class="sep"></span>`;
    const on = token.endsWith('!');
    const off = token.endsWith('-');
    const name = token.replace(/[!-]$/, '');
    return html`<button class=${classMap({ btn: true, on, off })} aria-label=${name} ?disabled=${off}>${icon(name)}</button>`;
  }

  private group(spec: string) {
    const tokens = spec.split(' ');
    const width = Math.round(tokens.reduce((sum, t) => sum + (NARROW[t] ?? BUTTON), 0));
    return html`<div class="group" style="width:${width}px">${tokens.map((t) => this.tool(t))}</div>`;
  }

  private toolRow(groups: string[]) {
    return html`<div class="toolrow">${groups.map((g) => html`<span class="grip"></span>${this.group(g)}`)}</div>`;
  }

  private close(label: string) {
    return html`<button class="close" aria-label=${label}><svg viewBox="0 0 11 11"><path d="M1 0l9 11M10 0L1 11"/></svg></button>`;
  }

  private select(value: string, label: string, extra = '', id = '') {
    return html`<span class="sel ${extra}"><select id=${id || label.replace(/\W/g, '')} aria-label=${label}><option>${value}</option></select>${chevron('down')}</span>`;
  }

  private topRuler() {
    return html`<svg class="r-top"><svg x="50%" overflow="visible">
      ${range(-2370, 2370, 10).map((u) => {
        const x = Math.round(u * PX_PER_UNIT) + 0.5;
        return u % 100 === 0
          ? svg`<path d="M${x} 0V24"/><text x=${x + 2} y="12">${u}</text>`
          : svg`<path d="M${x} 16V24"/>`;
      })}</svg></svg>`;
  }

  private leftRuler() {
    return html`<svg class="r-left"><svg y="50%" overflow="visible">
      ${range(-1070, 1070, 10).map((u) => {
        const y = Math.round(-u * PX_PER_UNIT) + 0.5;
        return u % 100 === 0
          ? svg`<path d="M0 ${y}H25"/><text transform="translate(15 ${y - 3}) rotate(-90)">${u}</text>`
          : svg`<path d="M16 ${y}H25"/>`;
      })}</svg></svg>`;
  }

  private world() {
    return html`<svg class="world">
      <svg x="50%" y="50%" overflow="visible">
        ${frames.map(([w, h]) => svg`<rect class="frame" x=${-w - 0.5} y=${-h} width=${2 * w} height=${2 * h}/>`)}
      </svg>
      <svg x="39" y="100%" overflow="visible">
        <path d="M0 -64V-41" stroke="#7fd000" stroke-width="3"/><path d="M0 -40H25" stroke="#ff3355" stroke-width="3"/><path d="M-1 -41h3v3h-3z" fill="#2a8cff"/>
      </svg></svg>`;
  }

  private menuItem(before: string, key: string, after: string) {
    return html`<span>${before}<u>${key}</u>${after}</span>`;
  }

  private chrome(): TemplateResult {
    return html`
      <header class="title">
        <svg class="logo" viewBox="0 0 24 24"><path d="M0 1q6 1 8 3l-3-4q8 1 11 5 7 3 7 9 0 9-9 9-8 0-8-9 0-4 1-6z" fill="#f59a12"/><path d="M2 3q9 1 13 5 6 2 5 8-4 5-9 1-3-7-9-14z" fill="#ffc928"/><path d="M11 9q6-2 8 3" fill="none" stroke="#b56a00" stroke-width="2"/></svg>
        <h1>Tornado3 - [D:<span class="won">₩</span>Projects<span class="won">₩</span>Project.t3p]</h1>
        <button class="winbtn" aria-label="Minimize"><svg viewBox="0 0 16 16"><path d="M0 8.500h16"/></svg></button>
        <button class="winbtn" aria-label="Restore"><svg viewBox="0 0 16 16"><path d="M.5 3.500h12v12H.5zM3.500 3.500v-3h12v12h-3"/></svg></button>
        <button class="winbtn" aria-label="Close"><svg viewBox="0 0 16 16"><path d="M0 0l16 16M16 0L0 16"/></svg></button>
      </header>
      <nav class="menu">
        ${this.menuItem('', 'F', 'ile')}${this.menuItem('', 'E', 'dit')}${this.menuItem('', 'V', 'iew')}
        ${this.menuItem('', 'S', 'cene')}${this.menuItem('', 'O', 'bject')}${this.menuItem('', 'A', 'nimation')}
        ${this.menuItem('Pla', 'y', '')}${this.menuItem('', 'T', 'ools')}${this.menuItem('', 'W', 'indow')}${this.menuItem('', 'H', 'elp')}
      </nav>
      <div class="bar">
        <div class="tools">${this.group('newFile openFile saveFile | cut- copy- paste- | undo- redo-')}</div>
        <div class="tools view">
          ${this.group('play! cloud! expand')}
          <span class="spot play"></span>
          <svg class="callout one-at">
            <circle cx="49" cy="49" r="49"/>
            <path d="M88 76L96 65 117 80 122 73 143 99 109 98 114 90Z"/>
            <text x="49" y="76">1</text>
          </svg>
        </div>
        <div class="modes">
          ${['EDIT', 'ON AIR'].map((m) => html`<button class=${classMap({ mode: true, on: this.mode === m })} @click=${() => (this.mode = m)}>${m}</button>`)}
        </div>
      </div>`;
  }

  private scenes() {
    return html`<section class="panel">
      <div class="head"><span class="dots"></span><button class="tab on">Scene List</button>${this.close('Close scene list')}</div>
      <div class="sc-tools">
        <button class="btn lit" aria-label="List">${icon('listView', 's20')}</button>
        <button class="btn on" aria-label="Cards">${icon('cardView', 's26')}</button>
        <button class="btn" aria-label="Grid">${icon('gridView', 's26')}</button>
        <button class="btn" aria-label="Details">${icon('detailView', 's26')}</button>
        <span class="sep"></span>
        <button class="btn" aria-label="Sort">${icon('sortAz', 's30')}</button>
        <button class="btn" aria-label="Refresh">${icon('refresh', 's30')}</button>
        <button class="btn" aria-label="Add">${icon('plus', 's26')}</button>
      </div>
      <div class="sc-body">
        <ul class="sc-list"><li><button class="card">
          <span class="meta"><span>0</span>${icon('film', 's20')}${icon('slot', 's20')}${icon('layers', 's20')}</span>
          <span class="shot"></span>
        </button></li></ul>
        <div class="vbar">${chevron('up')}${chevron('down')}</div>
      </div>
      <div class="sc-foot">
        <input class="rng-a" type="range" min="0" max="100" value="12" aria-label="Thumbnail size">
        <button class="lr" aria-label="Fit width">${icon('leftRight', 's20')}</button>
        <div class="track">${chevron('left')}${chevron('right')}</div>
      </div>
    </section>`;
  }

  private playout() {
    return html`<section class="panel playout">
      <span class="pull"></span><span class="ring"></span>
      <div class="head"><span class="dots"></span><button class="tab">Timeline</button>
        <div class="tabwrap"><button class="tab on">Playout</button><span class="spot"></span>
          <svg class="callout two-at">
            <circle cx="49" cy="49" r="49"/>
            <path d="M84 81L91 74 122 89 128 82 148 109 115 108 119 100Z"/>
            <text x="49" y="76">2</text>
          </svg>
        </div>
        ${this.close('Close playout')}</div>
      <div class="groups">
        <fieldset><legend>Option</legend><div class="in">
          <div class="pair"><button class="pad low" aria-label="Play one">${icon('loopOne', 's26')}</button><button class="pad low" aria-label="Clear">${icon('boxCross', 's26')}</button></div>
          <div class="box-empty"></div>
          <button class="pad word">Last Next In</button>
          <div class="stack">
            <label class="ctl-label" for="ctc">Control Target Channel:</label>${this.select('0', 'Control Target Channel', '', 'ctc')}
            <label class="ctl-label ctl-b" for="ctl">Control Target Layer:</label>${this.select('Layer 0', 'Control Target Layer', '', 'ctl')}
          </div>
        </div></fieldset>
        <fieldset><legend>Next</legend><div class="in">
          <div class="pair"><input class="line" aria-label="Next scene"><button class="more">...</button></div>
          <div class="screen"></div>
          <div class="pair">
            ${this.select('In Out', 'Effect', 'mode-sel')}
            <div class="spin"><input value="1" aria-label="Count"><div><button aria-label="Increase">${chevron('up')}</button><button aria-label="Decrease">${chevron('down')}</button></div></div>
            ${['loop', 'toStart', 'rewind', 'forward', 'toEnd', 'slashBox'].map((n) => html`<button class="pad" aria-label=${n}>${icon(n, 's26')}</button>`)}
          </div>
        </div></fieldset>
        <fieldset><legend>Program</legend><div class="in">
          <input class="line low" aria-label="Program scene">
          <div class="screen"></div>
          <div class="pair">${['prevSolid', 'nextSolid', 'pause', 'stop', 'slashBox', 'chevUp', 'chevDown'].map((n) => html`<button class="pad" aria-label=${n}>${icon(n, 's26')}</button>`)}</div>
        </div></fieldset>
        ${['Trigger', 'Range'].map((name) => html`<fieldset><legend>${name}</legend><div class="in">
          ${range(1, 6, 1).map((i) => html`<button class="slot" disabled aria-label="${name} ${i}">${name === 'Range' ? `Range ${i}` : ''}</button>`)}
          <div class="pair"><span class="sel dim"><select disabled aria-label=${name}></select><svg class="tri" viewBox="0 0 8 8"><path d="M0 1h8L4 8z"/></svg></span>
          <button class="pad dim" aria-label="Next ${name}">${icon('nextSolid', 's26')}</button></div>
        </div></fieldset>`)}
      </div>
    </section>`;
  }

  private right() {
    return html`<div class="right">
      <section class="panel tree">
        <div class="head"><span class="dots"></span><button class="tab on">Object Tree</button><button class="tab">History</button><button class="tab">Library</button>${this.close('Close tree')}</div>
        <div class="find"><input class="field" aria-label="Search objects">${this.select('All', 'Object filter')}</div>
        <div class="tree-body">
          <div class="grid-wrap"><table>
            <thead><tr><th class="icon-col">${icon('eye', 's20')}</th><th class="icon-col">${icon('lock', 's20')}</th><th class="name">Name</th></tr></thead>
            <tbody>${range(1, 18, 1).map((i) => html`<tr><td></td><td></td><td>${i === 1 ? html`<span class="node">${icon('film', 's20')}Scene</span>` : ''}</td></tr>`)}</tbody>
          </table></div>
          <div class="vbar">${chevron('up')}${chevron('down')}</div>
        </div>
        <div class="tree-foot">
          <input class="rng-b" type="range" min="0" max="100" value="3" aria-label="Row size">
          ${['up', 'down', 'cross'].map((n) => html`<button class="mini" aria-label=${n}>${icon(n)}</button>`)}
          <div class="h-scroll">${chevron('left')}<span class="thumb"></span>${chevron('right')}</div>
        </div>
      </section>
      <section class="panel attr">
        <div class="head"><span class="dots"></span><button class="tab on">Attribute</button>${this.close('Close attributes')}</div>
        <div class="attr-body">
          <nav class="side"><div>
            ${['film', 'image', 'light', 'speaker', 'cameraLoop', 'playDash', 'sparkle', 'dots'].map((n, i) => html`<button class=${i === 0 ? 'on' : ''} aria-label=${n}>${icon(n, 's30')}</button>`)}
          </div></nav>
          <form class="form">
            <label for="name">Name:</label><input class="field" id="name">
            <label for="channel">Channel:</label>${this.select('0', 'Channel', '', 'channel')}
            <label for="layer"><u>L</u>ayer:</label>${this.select('0', 'Layer', '', 'layer')}
            <label for="type">Type:</label>${this.select('Normal', 'Type', '', 'type')}
            <label for="file"><u>F</u>ile Name:</label><textarea id="file"></textarea>
            <label for="fps">Base FPS:</label>${this.select('59.94', 'Base FPS', '', 'fps')}<span class="unit">fps</span>
          </form>
          <div class="vbar">${chevron('up')}${chevron('down')}</div>
        </div>
      </section>
    </div>`;
  }

  render() {
    return html`<div class="page"><div class="window">
      ${this.chrome()}
      <div class="main">
        ${this.scenes()}
        <button class="handle" aria-label="Collapse left"><svg viewBox="0 0 4 8"><path d="M4 0v8L0 4z"/></svg></button>
        <div class="center">
          <div class="panel toolbox">${this.toolRow(rowOne)}${this.toolRow(rowTwo)}</div>
          <section class="panel stage">
            <div class="docs"><button class="doc">Project.t3p ${icon('cross', 's20')}</button></div>
            <div class="rule"></div>
            <div class="box">
              ${this.topRuler()}${this.leftRuler()}${this.world()}
              <div class="vbar v-scroll">${chevron('up')}${chevron('down')}</div>
              <div class="nav">
                ${this.select('Perspective', 'View', 'sel-a')}${this.select('59%', 'Zoom', 'sel-b cut')}
                ${['plus', 'minus', 'fit'].map((n) => html`<button class="navbtn" aria-label=${n}>${icon(n)}</button>`)}
                <div class="track">${chevron('left')}${chevron('right')}</div>
              </div>
            </div>
          </section>
          ${this.playout()}
        </div>
        <button class="handle" aria-label="Collapse right"><svg viewBox="0 0 4 8"><path d="M0 0v8l4-4z"/></svg></button>
        ${this.right()}
      </div>
      <footer class="status">
        <span class="cell scene">Scene 1/1</span><span class="cell poly">0 Vertices, 0 Polygons</span><span class="cell pos">x:376.05   y:527.32   z:0.04</span>
        <span class="cell lock-key"></span><span class="cell key">NUM</span><span class="cell"></span><span class="cell ins">INS</span>
      </footer>
    </div></div>`;
  }
}
